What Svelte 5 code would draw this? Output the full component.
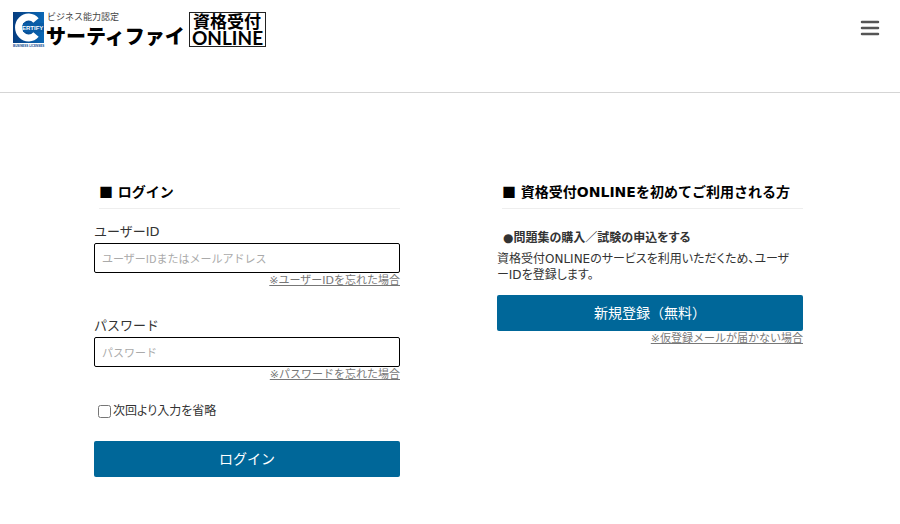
<script lang="ts">
    let userId = $state("");
    let password = $state("");
    let remember = $state(false);

    function onSubmit(event: SubmitEvent) {
        event.preventDefault();
    }
</script>

<header>
    <a class="logo" href="/" aria-label="サーティファイ 資格受付ONLINE">
        <svg width="254" height="36" viewBox="0 0 254 36">
            <defs>
                <linearGradient id="shade" x1="0" y1="0" x2="1" y2="0">
                    <stop offset="0" stop-color="#063d80" />
                    <stop offset="1" stop-color="#0b68b5" />
                </linearGradient>
            </defs>
            <rect width="31" height="31" fill="url(#shade)" />
            <path
                d="M23 8.500A10 10.500 0 1 0 23 22.500"
                fill="none"
                stroke="#fff"
                stroke-width="7"
            />
            <rect x="10" y="11" width="21" height="9" fill="#0a5ca6" />
            <text class="certify" x="9" y="18">ERTIFY</text>
            <text class="strip" x="0" y="35">BUSINESS LICENSES</text>
            <text class="tagline" x="34" y="8">ビジネス能力認定</text>
            <text class="name" x="33" y="32">サーティファイ</text>
            <rect x="176.500" y="0.500" width="76" height="34" fill="#fff" stroke="#222" />
            <text class="service" x="180" y="16">資格受付</text>
            <text class="online" x="179" y="33">ONLINE</text>
        </svg>
    </a>
    <button class="menu" type="button" aria-label="メニュー">
        <svg width="18" height="16" viewBox="0 0 18 16">
            <path d="M1 2h16M1 8h16M1 14h16" stroke="#555" stroke-width="2.500" stroke-linecap="round" />
        </svg>
    </button>
</header>

<main>
    <section>
        <h2><span class="mark">■</span> ログイン</h2>
        <form onsubmit={onSubmit}>
            <div class="field">
                <label for="user-id">ユーザーID</label>
                <input id="user-id" type="text" placeholder="ユーザーIDまたはメールアドレス" bind:value={userId} />
                <a class="help" href="/forgot-id">※ユーザーIDを忘れた場合</a>
            </div>
            <div class="field">
                <label for="password">パスワード</label>
                <input id="password" type="password" placeholder="パスワード" bind:value={password} />
                <a class="help" href="/forgot-password">※パスワードを忘れた場合</a>
            </div>
            <label class="remember">
                <input type="checkbox" bind:checked={remember} />
                次回より入力を省略
            </label>
            <button class="action" type="submit">ログイン</button>
        </form>
    </section>

    <section>
        <h2><span class="mark">■</span> 資格受付ONLINEを初めてご利用される方</h2>
        <h3>●問題集の購入／試験の申込をする</h3>
        <p>資格受付ONLINEのサービスを利用いただくため、ユーザーIDを登録します。</p>
        <a class="action" href="/register">新規登録（無料）</a>
        <a class="help" href="/mail-help">※仮登録メールが届かない場合</a>
    </section>
</main>

<style>
    :global(body) {
        background: #fff;
        color: #333;
        font-family: "DejaVu Sans", "Noto Sans CJK JP", sans-serif;
        font-size: 12px;
    }

    header {
        display: flex;
        justify-content: space-between;
        align-items: flex-start;
        height: 80px;
        padding: 12px 21px 0 13px;
        border-bottom: 1px solid #d5d5d5;
    }
    .logo svg,
    .menu svg {
        display: block;
        overflow: visible;
    }
    .menu {
        margin-top: 8px;
        padding: 0;
        border: 0;
        background: none;
        cursor: pointer;
    }

    .certify {
        font: bold 6px "Liberation Sans", sans-serif;
        fill: #fff;
    }
    .strip {
        font: bold 3px "Liberation Sans", sans-serif;
        fill: #0a4a91;
    }
    .tagline {
        font: 9px "Noto Sans CJK JP", sans-serif;
        fill: #444;
    }
    .name {
        font: 900 20px "Noto Sans CJK JP", sans-serif;
        fill: #000;
    }
    .service {
        font: bold 17px "Noto Sans CJK JP", sans-serif;
        fill: #000;
    }
    .online {
        font: bold 19px Lato, sans-serif;
        fill: #000;
    }

    main {
        display: grid;
        grid-template-columns: 1fr 1fr;
        column-gap: 97px;
        align-items: start;
        padding: 90px 97px 47px 94px;
    }
    section {
        display: flex;
        flex-direction: column;
        min-width: 0;
    }

    h2 {
        margin: 0 0 12px 5px;
        padding-bottom: 7px;
        border-bottom: 1px solid #eee;
        color: #000;
        font-size: 14px;
        line-height: 18px;
    }
    .mark {
        font-family: "Noto Sans CJK JP", sans-serif;
        line-height: 1;
    }
    h3 {
        margin: 8px 0 4px 6px;
        font-size: 12px;
        line-height: 18px;
        font-feature-settings: "palt";
    }
    p {
        margin: 0 0 12px;
        padding-right: 8px;
        line-height: 16px;
        line-break: anywhere;
        font-feature-settings: "palt";
    }

    form,
    .field {
        display: flex;
        flex-direction: column;
    }
    .field {
        margin-bottom: 26px;
    }
    .field + .remember {
        margin-top: -8px;
    }
    .field label {
        font-size: 13px;
        line-height: 22px;
    }
    .field input {
        box-sizing: border-box;
        width: 100%;
        height: 30px;
        padding: 0 7px;
        border: 1px solid #000;
        border-radius: 2px;
        background: #fff;
        font: 11px "Noto Sans CJK JP", sans-serif;
    }
    .field input::placeholder {
        color: #aaa;
    }
    .help {
        align-self: flex-end;
        color: #777;
        font-size: 11px;
        line-height: 16px;
    }

    .remember {
        display: flex;
        align-items: center;
        gap: 2px;
        margin-bottom: 20px;
        line-height: 20px;
        font-feature-settings: "palt";
    }
    .remember input {
        width: 13px;
        height: 13px;
        margin: 0 0 0 4px;
    }

    .action {
        padding: 0;
        border: 0;
        border-radius: 2px;
        background: #006799;
        color: #fff;
        font-family: inherit;
        font-size: 14px;
        line-height: 36px;
        text-align: center;
        text-decoration: none;
        cursor: pointer;
    }

    @media (max-width: 700px) {
        main {
            grid-template-columns: 1fr;
            row-gap: 48px;
            padding: 48px 24px;
        }
    }
</style>
